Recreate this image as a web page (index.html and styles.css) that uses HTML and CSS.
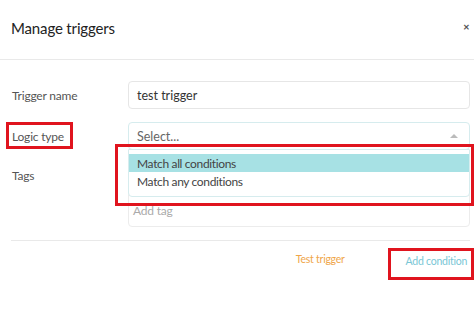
FILE: index.html
```html
<!DOCTYPE html>
<html>
<head>
<meta charset="utf-8">
<link rel="stylesheet" href="styles.css">
</head>
<body>
<div class="modal">
  <div class="modal-header">
    <h1 class="title">Manage triggers</h1>
    <span class="close">&#x2715;</span>
  </div>
  <div class="modal-body">
    <div class="row">
      <label class="label">Trigger name</label>
      <div class="input">test trigger</div>
    </div>
    <div class="row">
      <label class="label">Logic type</label>
      <div class="select">
        <span class="placeholder">Select...</span>
        <span class="arrow"></span>
      </div>
    </div>
    <div class="row row-tags">
      <label class="label">Tags</label>
      <div class="tags"><span class="tag-placeholder">Add tag</span></div>
    </div>
    <div class="menu">
      <div class="option active">Match all conditions</div>
      <div class="option">Match any conditions</div>
    </div>
  </div>
  <div class="modal-footer">
    <span class="btn btn-test">Test trigger</span>
    <span class="btn btn-add">Add condition</span>
  </div>
  <div class="mark mark-logic"></div>
  <div class="mark mark-menu"></div>
  <div class="mark mark-add"></div>
</div>
</body>
</html>
```
FILE: styles.css
```css
* { box-sizing: border-box; }
html, body { margin: 0; padding: 0; background: #fff; }
body {
  font-family: Lato, "Open Sans", "Liberation Sans", sans-serif;
  color: #333;
  width: 474px;
  height: 320px;
  overflow: hidden;
}
.modal { position: relative; width: 474px; height: 320px; }
.modal-header {
  height: 60px;
  border-bottom: 1px solid #e9e9e9;
  display: flex;
  align-items: center;
  justify-content: space-between;
  padding: 0 4px 4px 11px;
}
.title {
  margin: 0;
  font-size: 15px;
  letter-spacing: -0.15px;
  font-weight: 400;
  color: #222;
}
.close {
  font-size: 8px;
  font-weight: 700;
  color: #555;
  margin-top: -1px;
}
.modal-body {
  position: relative;
  padding: 21px 4px 0 12px;
  display: flex;
  flex-direction: column;
  gap: 13px;
}
.row {
  display: grid;
  grid-template-columns: 116px 342px;
  align-items: center;
}
.row-tags { align-items: start; }
.row-tags .label { padding-top: 5px; }
.label { font-size: 12px; letter-spacing: -0.2px; color: #555; }
.input, .select {
  height: 28px;
  border: 1px solid #e6e6e6;
  border-radius: 4px;
  padding: 0 8px;
  display: flex;
  align-items: center;
  font-size: 12.5px;
  color: #333;
}
.select {
  border-color: #d6ecee;
  justify-content: space-between;
}
.placeholder { color: #666; }
.arrow {
  width: 0; height: 0;
  border-left: 4px solid transparent;
  border-right: 4px solid transparent;
  border-bottom: 4px solid #bbb;
  margin-right: 3px;
}
.tags {
  height: 64px;
  border: 1px solid #ececec;
  border-radius: 4px;
  display: flex;
  align-items: flex-end;
  padding: 0 4px 8px;
}
.tag-placeholder { font-size: 12px; letter-spacing: -0.2px; color: #aaa; }
.menu {
  position: absolute;
  left: 128px;
  top: 89px;
  width: 342px;
  height: 48px;
  background: #fff;
  border: 1px solid #d6ecee;
  border-radius: 0 0 4px 4px;
  padding-top: 4px;
}
.option {
  height: 19px;
  padding: 0 8px;
  font-size: 12px;
  letter-spacing: -0.35px;
  color: #444;
  display: flex;
  align-items: center;
}
.option.active { background: #a7e1e4; height: 18px; }
.modal-footer {
  margin: 13px 4px 0 11px;
  border-top: 1px solid #e9e9e9;
  display: flex;
  justify-content: flex-end;
  gap: 61px;
  padding: 12px 3px 0 0;
}
.btn { font-size: 10.5px; letter-spacing: -0.25px; }
.btn-test { color: #f0a64a; }
.btn-add { color: #79c6d5; margin-top: 2px; }
.mark {
  position: absolute;
  border: 3px solid #e0141e;
}
.mark-logic { left: 6px; top: 122px; width: 67px; height: 27px; }
.mark-menu { left: 115px; top: 144px; width: 359px; height: 62px; }
.mark-add { left: 388px; top: 248px; width: 86px; height: 32px; }
```
